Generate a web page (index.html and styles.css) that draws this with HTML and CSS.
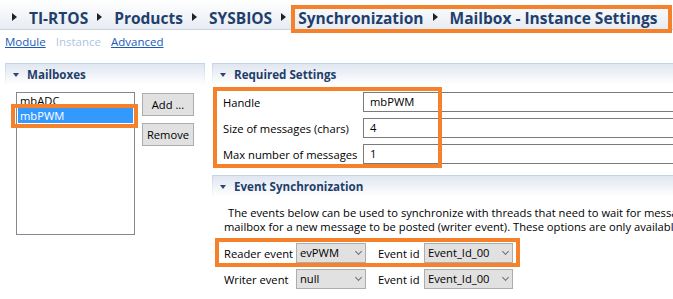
FILE: index.html
```html
<!DOCTYPE html>
<html lang="en">
<head>
    <meta charset="UTF-8">
    <meta name="viewport" content="width=device-width, initial-scale=1.0">
    <title>Mailbox - Instance Settings</title>
    <link rel="stylesheet" href="styles.css">
</head>
<body>

    <div class="crumbs">
        <span class="arrow"></span><span class="crumb">TI-RTOS</span>
        <span class="arrow"></span><span class="crumb">Products</span>
        <span class="arrow"></span><span class="crumb">SYSBIOS</span>
        <span class="arrow"></span>
        <span class="crumb-group marked">
            <span class="crumb">Synchronization</span>
            <span class="arrow"></span><span class="crumb">Mailbox - Instance Settings</span>
        </span>
    </div>

    <div class="tabs">
        <a href="#">Module</a>
        <span class="disabled">Instance</span>
        <a href="#">Advanced</a>
    </div>

    <div class="main">
        <div class="left">
            <div class="section-head"><span class="caret"></span>Mailboxes</div>
            <div class="left-body">
                <div class="listbox">
                    <div class="item">mbADC</div>
                    <div class="item selected marked">mbPWM</div>
                </div>
                <div class="buttons">
                    <button class="btn">Add ...</button>
                    <button class="btn">Remove</button>
                </div>
            </div>
        </div>

        <div class="right">
            <div class="section-head"><span class="caret"></span>Required Settings</div>
            <div class="fields marked">
                <div class="field">
                    <label>Handle</label>
                    <div class="textbox">mbPWM</div>
                </div>
                <div class="field">
                    <label>Size of messages (chars)</label>
                    <div class="textbox">4</div>
                </div>
                <div class="field">
                    <label>Max number of messages</label>
                    <div class="textbox">1</div>
                </div>
            </div>

            <div class="section-head event-head"><span class="caret"></span>Event Synchronization</div>
            <div class="desc">
                <div class="line first">The events below can be used to synchronize with threads that need to wait for messages to arrive in the</div>
                <div class="line">mailbox for a new message to be posted (writer event). These options are only available when events are enabled.</div>
            </div>
            <div class="event-row marked">
                <span class="ev-label">Reader event</span>
                <div class="combo small">evPWM<span class="chev"></span></div>
                <span class="id-label">Event id</span>
                <div class="combo wide">Event_Id_00<span class="chev"></span></div>
            </div>
            <div class="event-row">
                <span class="ev-label">Writer event</span>
                <div class="combo small">null<span class="chev"></span></div>
                <span class="id-label">Event id</span>
                <div class="combo wide">Event_Id_00<span class="chev"></span></div>
            </div>
        </div>
    </div>

</body>
</html>
```

FILE: styles.css
```css
body {
    margin: 0;
    width: 673px;
    height: 299px;
    overflow: hidden;
    background-color: #ffffff;
    font-family: "Open Sans", "Noto Sans", sans-serif;
    font-size: 11.2px;
    color: #000000;
}

/* orange annotation boxes */
.marked {
    position: relative;
}

.marked::after {
    content: "";
    position: absolute;
    border: 4px solid #f6812b;
    pointer-events: none;
}

/* breadcrumb bar */
.crumbs {
    display: flex;
    align-items: center;
    height: 30px;
    box-sizing: border-box;
    padding: 7px 0 0 3px;
    border-bottom: 1px solid #c9d3df;
    background: linear-gradient(#ffffff, #e7ecf3);
    font-size: 15.5px;
    font-weight: bold;
    line-height: 22px;
    color: #1f3f6d;
    white-space: nowrap;
}

.arrow {
    width: 0;
    height: 0;
    margin: -2px 12px 0 9px;
    border-left: 5px solid #222222;
    border-top: 4px solid transparent;
    border-bottom: 4px solid transparent;
}

.crumb-group {
    display: flex;
    align-items: center;
}

.crumb-group::after {
    top: -2px;
    bottom: -4px;
    left: -7px;
    right: -15px;
}

/* Module / Instance / Advanced */
.tabs {
    display: flex;
    gap: 10px;
    padding: 4px 5px 0;
    font-size: 11.5px;
    line-height: 16px;
}

.tabs a {
    color: #1a5bb8;
}

.tabs .disabled {
    color: #adc6e3;
}

.main {
    display: flex;
    margin-top: 13px;
    padding-left: 5px;
}

.left {
    flex: none;
    width: 200px;
}

.right {
    flex: none;
    width: 600px;
    margin-left: 7px;
}

/* section headers */
.section-head {
    display: flex;
    align-items: center;
    height: 22px;
    box-sizing: border-box;
    padding-left: 7px;
    border: 1px solid #c3d3e5;
    border-bottom: none;
    border-image: linear-gradient(#c3d3e5, #ffffff) 1;
    background: linear-gradient(#e0e7f1, #ffffff);
    font-size: 11.6px;
    font-weight: bold;
    color: #1f3e6c;
}

.caret {
    width: 0;
    height: 0;
    margin: 1px 8px 0 0;
    border-top: 4px solid #2b4870;
    border-left: 3px solid transparent;
    border-right: 3px solid transparent;
}

/* mailbox list */
.left-body {
    display: flex;
    gap: 7px;
    padding: 7px 0 0 11px;
}

.listbox {
    width: 119px;
    height: 143px;
    box-sizing: border-box;
    border: 1px solid #828790;
}

.item {
    height: 15px;
    line-height: 15px;
    padding-left: 3px;
}

.item.selected {
    margin: 0 1px;
    padding-left: 2px;
    background-color: #3399ff;
    color: #ffffff;
}

.item.selected::after {
    top: -4px;
    bottom: -5px;
    left: -7px;
    right: -5px;
}

.buttons {
    display: flex;
    flex-direction: column;
    gap: 7px;
    margin-top: 1px;
}

.btn {
    width: 52px;
    height: 23px;
    padding: 0;
    background-color: #e1e1e1;
    border: 1px solid #adadad;
    font: inherit;
    color: #000000;
}

/* required settings */
.fields {
    display: flex;
    flex-direction: column;
    gap: 6px;
    padding: 7px 0 0 11px;
}

.fields::after {
    top: 2px;
    bottom: -4px;
    left: 1px;
    width: 221px;
}

.field {
    display: flex;
    align-items: center;
}

.field label {
    flex: none;
    width: 140px;
}

.textbox {
    flex: 1;
    height: 20px;
    box-sizing: border-box;
    border: 1px solid #7a7a7a;
    padding-left: 6px;
    line-height: 18px;
}

/* event synchronization */
.event-head {
    margin-top: 11px;
}

.desc {
    padding: 9px 0 0 12px;
    line-height: 14px;
    white-space: nowrap;
}

.desc .first {
    text-indent: 4px;
}

.event-row {
    display: flex;
    align-items: center;
    width: 289px;
    margin: 9px 0 0 12px;
}

.event-row + .event-row {
    margin-top: 6px;
}

.event-row.marked::after {
    top: -5px;
    bottom: -4px;
    left: -9px;
    right: -7px;
}

.ev-label {
    width: 72px;
}

.id-label {
    width: 46px;
    margin-left: 12px;
}

.combo {
    position: relative;
    height: 20px;
    box-sizing: border-box;
    padding-left: 3px;
    border: 1px solid #adadad;
    background-color: #e1e1e1;
    line-height: 18px;
}

.combo.small {
    width: 70px;
}

.combo.wide {
    width: 89px;
}

.chev {
    position: absolute;
    right: 4px;
    top: 5px;
    width: 4px;
    height: 4px;
    border-right: 1px solid #707070;
    border-bottom: 1px solid #707070;
    transform: rotate(45deg);
}
```
